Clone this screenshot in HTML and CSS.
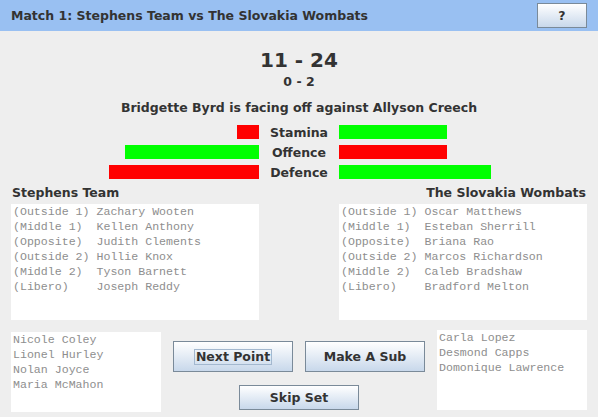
FILE: index.html
```html
<!DOCTYPE html>
<html>
<head>
<meta charset="utf-8">
<link rel="stylesheet" href="styles.css">
</head>
<body>
<div class="window">
  <header class="titlebar">
    <span class="title">Match 1: Stephens Team vs The Slovakia Wombats</span>
    <button class="btn help">?</button>
  </header>
  <main class="content">
    <div class="score">11 - 24</div>
    <div class="sets">0 - 2</div>
    <div class="facing">Bridgette Byrd is facing off against Allyson Creech</div>
    <div class="stats">
      <div class="bar-cell left"><div class="bar red" style="width:22px"></div></div>
      <div class="stat-label">Stamina</div>
      <div class="bar-cell right"><div class="bar green" style="width:108px"></div></div>
      <div class="bar-cell left"><div class="bar green" style="width:134px"></div></div>
      <div class="stat-label">Offence</div>
      <div class="bar-cell right"><div class="bar red" style="width:108px"></div></div>
      <div class="bar-cell left"><div class="bar red" style="width:150px"></div></div>
      <div class="stat-label">Defence</div>
      <div class="bar-cell right"><div class="bar green" style="width:152px"></div></div>
    </div>
    <div class="teams">
      <div class="team">
        <div class="team-name">Stephens Team</div>
        <div class="list roster">
          <div class="line">(Outside 1) Zachary Wooten</div>
          <div class="line">(Middle 1)  Kellen Anthony</div>
          <div class="line">(Opposite)  Judith Clements</div>
          <div class="line">(Outside 2) Hollie Knox</div>
          <div class="line">(Middle 2)  Tyson Barnett</div>
          <div class="line">(Libero)    Joseph Reddy</div>
        </div>
      </div>
      <div class="team team-right">
        <div class="team-name">The Slovakia Wombats</div>
        <div class="list roster">
          <div class="line">(Outside 1) Oscar Matthews</div>
          <div class="line">(Middle 1)  Esteban Sherrill</div>
          <div class="line">(Opposite)  Briana Rao</div>
          <div class="line">(Outside 2) Marcos Richardson</div>
          <div class="line">(Middle 2)  Caleb Bradshaw</div>
          <div class="line">(Libero)    Bradford Melton</div>
        </div>
      </div>
    </div>
    <div class="bottom">
      <div class="list bench bench-left">
        <div class="line">Nicole Coley</div>
        <div class="line">Lionel Hurley</div>
        <div class="line">Nolan Joyce</div>
        <div class="line">Maria McMahon</div>
      </div>
      <div class="actions">
        <div class="action-row">
          <button class="btn action"><span class="focus">Next Point</span></button>
          <button class="btn action">Make A Sub</button>
        </div>
        <div class="action-row">
          <button class="btn action short">Skip Set</button>
        </div>
      </div>
      <div class="list bench bench-right">
        <div class="line">Carla Lopez</div>
        <div class="line">Desmond Capps</div>
        <div class="line">Domonique Lawrence</div>
      </div>
    </div>
  </main>
</div>
</body>
</html>
```
FILE: styles.css
```css
* { box-sizing: border-box; }
html, body {
  margin: 0;
  padding: 0;
  background: #eeeeee;
}
body {
  width: 598px;
  height: 417px;
  overflow: hidden;
  font-family: "DejaVu Sans", sans-serif;
  color: #333333;
}
.titlebar {
  height: 31px;
  background: #99c0f2;
  display: flex;
  align-items: center;
  justify-content: space-between;
  padding: 0 11px;
}
.title {
  font-weight: bold;
  font-size: 12.5px;
}
.btn {
  font-family: "DejaVu Sans", sans-serif;
  font-weight: bold;
  font-size: 12.5px;
  color: #333333;
  background: linear-gradient(#ffffff, #c8d8eb);
  border: 1px solid #7a8a99;
  border-radius: 0;
  padding: 0;
  margin: 0;
  display: flex;
  align-items: center;
  justify-content: center;
}
.help {
  width: 50px;
  height: 25px;
  margin-top: -1px;
}
.content {
  padding: 17px 11px 0;
}
.score {
  text-align: center;
  font-weight: bold;
  font-size: 20px;
  line-height: 24px;
}
.sets {
  text-align: center;
  font-weight: bold;
  font-size: 12.5px;
  line-height: 16px;
  margin-top: 2px;
}
.facing {
  text-align: center;
  font-weight: bold;
  font-size: 12.5px;
  line-height: 16px;
  margin-top: 10px;
}
.stats {
  display: grid;
  grid-template-columns: 248px 80px 248px;
  grid-auto-rows: 14px;
  row-gap: 6px;
  margin-top: 9px;
}
.bar-cell {
  display: flex;
}
.bar-cell.left { justify-content: flex-end; }
.bar-cell.right { justify-content: flex-start; }
.bar { height: 14px; }
.red { background: #ff0000; }
.green { background: #00ff00; }
.stat-label {
  text-align: center;
  font-weight: bold;
  font-size: 12.5px;
  line-height: 15px;
}
.teams {
  display: grid;
  grid-template-columns: 248px 80px 248px;
  margin-top: 6px;
}
.team-right {
  grid-column: 3;
}
.team-name {
  font-weight: bold;
  font-size: 12.5px;
  line-height: 16px;
  margin-bottom: 3px;
  padding-left: 1px;
}
.team-right .team-name {
  text-align: right;
  padding-right: 1px;
}
.list {
  background: #ffffff;
  font-family: "Liberation Mono", "Courier New", monospace;
  font-size: 11.6px;
  line-height: 15px;
  color: #8e8e8e;
  padding: 0 2px;
}
.line { white-space: pre; }
.roster { height: 116px; }
.bottom {
  display: grid;
  grid-template-columns: 150px 1fr 150px;
  margin-top: 10px;
  align-items: start;
}
.bench { height: 80px; }
.bench-left { margin-top: 2px; }
.actions {
  display: flex;
  flex-direction: column;
  align-items: center;
  gap: 13px;
  padding-top: 11px;
}
.action-row {
  display: flex;
  gap: 12px;
}
.action {
  width: 120px;
  height: 31px;
}
.action.short { height: 25px; }
.focus {
  border: 1px solid #a3b8cf;
  padding: 0 1px;
  line-height: 14px;
}
```
